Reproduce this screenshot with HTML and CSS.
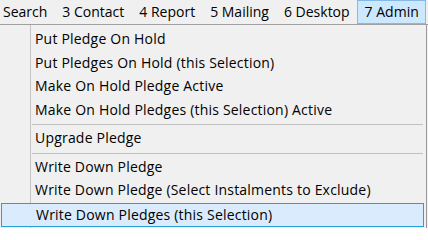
FILE: index.html
```html
<!DOCTYPE html>
<html>
<head>
<meta charset="utf-8">
<link rel="stylesheet" href="styles.css">
</head>
<body>
<div class="screen">
  <div class="menubar">
    <span class="mb-item first">Search</span>
    <span class="mb-item">3 Contact</span>
    <span class="mb-item">4 Report</span>
    <span class="mb-item">5 Mailing</span>
    <span class="mb-item">6 Desktop</span>
    <span class="mb-item active">7 Admin</span>
  </div>
  <div class="popup">
    <div class="item">Put Pledge On Hold</div>
    <div class="item">Put Pledges On Hold (this Selection)</div>
    <div class="item">Make On Hold Pledge Active</div>
    <div class="item">Make On Hold Pledges (this Selection) Active</div>
    <div class="sep"></div>
    <div class="item">Upgrade Pledge</div>
    <div class="sep"></div>
    <div class="item">Write Down Pledge</div>
    <div class="item">Write Down Pledge (Select Instalments to Exclude)</div>
    <div class="item selected">Write Down Pledges (this Selection)</div>
  </div>
</div>
</body>
</html>
```
FILE: styles.css
```css
html, body {
  margin: 0;
  padding: 0;
  background: #ffffff;
}
.screen {
  width: 428px;
  height: 228px;
  overflow: hidden;
  font-family: "Open Sans", "Noto Sans", sans-serif;
  font-size: 14px;
  letter-spacing: 0.2px;
  color: #000;
  background: #f0f0f0;
}
.menubar {
  display: flex;
  height: 24px;
  border-bottom: 1px solid #a0a0a0;
  background: #f0f0f0;
  margin-left: -5px;
  letter-spacing: 0;
}
.mb-item {
  flex: none;
  box-sizing: border-box;
  height: 24px;
  line-height: 22px;
  padding: 0 6px 0 7px;
  border: 1px solid transparent;
  border-bottom: none;
  white-space: nowrap;
}
.mb-item.active {
  background: #cce8ff;
  border: 1px solid #84b8e6;
  height: 24px;
}
.popup {
  width: 426px;
  height: 203px;
  padding-top: 3px;
  border-right: 1px solid #9a9a9a;
  background-color: #f0f0f0;
  background-image: linear-gradient(to right, transparent 30px, #c4c4c4 30px, #c4c4c4 31px, transparent 31px);
}
.item {
  box-sizing: border-box;
  height: 23.5px;
  line-height: 22px;
  padding-left: 35px;
  white-space: nowrap;
}
.item.selected {
  margin: 0 2px 0 1px;
  padding-left: 34px;
  border: 1px solid #26a0da;
  background: #d9ebfc;
  height: 24px;
}
.sep {
  height: 5px;
  margin-left: 32px;
  margin-right: 3px;
  background: linear-gradient(to bottom, transparent 2px, #c0c0c0 2px, #c0c0c0 3px, transparent 3px);
}
```
